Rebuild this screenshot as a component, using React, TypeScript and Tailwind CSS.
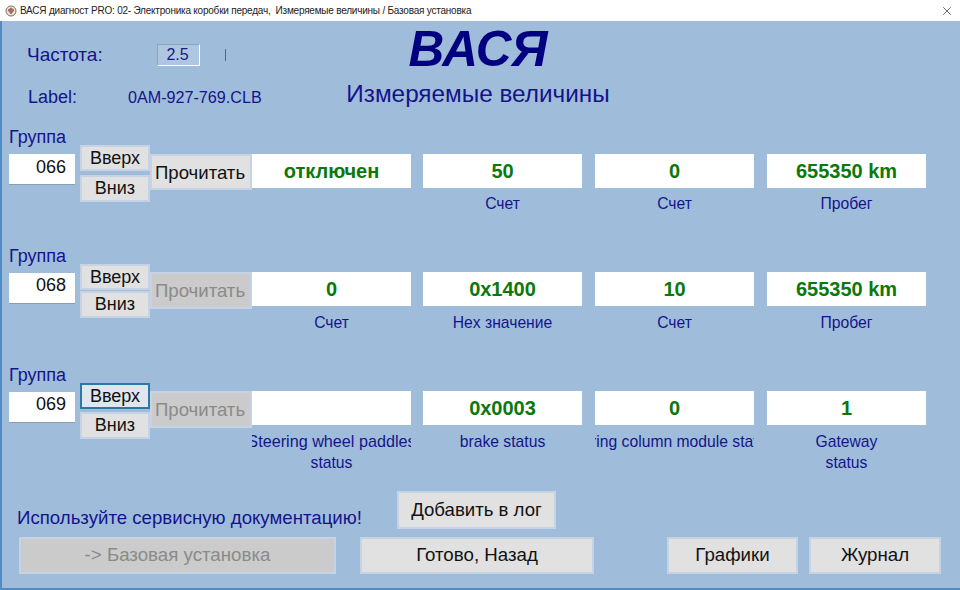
import { X } from "lucide-react";

const groups = [
    {
        id: "066",
        active: true,
        focused: false,
        downGap: "mt-[4px]",
        cellTop: "mt-[27px]",
        labelTop: "mt-[5px]",
        readHeight: "h-[36px]",
        inputText: "pt-[1px]",
        cells: [
            { value: "отключен", label: [] },
            { value: "50", label: ["Счет"] },
            { value: "0", label: ["Счет"] },
            { value: "655350 km", label: ["Пробег"] },
        ],
    },
    {
        id: "068",
        active: false,
        focused: false,
        downGap: "mt-[1px]",
        cellTop: "mt-[26px]",
        labelTop: "mt-[6px]",
        readHeight: "h-[37px]",
        inputText: "",
        cells: [
            { value: "0", label: ["Счет"] },
            { value: "0x1400", label: ["Hex значение"] },
            { value: "10", label: ["Счет"] },
            { value: "655350 km", label: ["Пробег"] },
        ],
    },
    {
        id: "069",
        active: false,
        focused: true,
        downGap: "mt-[3px]",
        cellTop: "mt-[26px]",
        labelTop: "mt-[6px]",
        readHeight: "h-[37px]",
        inputText: "",
        cells: [
            { value: "", label: ["Steering wheel paddles", "status"], lineClass: "first:text-[16.2px]" },
            { value: "0x0003", label: ["brake status"] },
            // clipped in the original too, sits a bit left of centre
            { value: "0", label: ["Steering column module status"], lineClass: "mr-[16px]" },
            { value: "1", label: ["Gateway", "status"] },
        ],
    },
];

const btn = "flex items-center justify-center border-2 border-[#c5d3e4] bg-[#e1e1e1] text-[#111]";
const btnOff = "flex items-center justify-center border-2 border-[#c5d3e4] bg-[#cbcbcb] text-[#8a8a8a]";

function Group({ group }: { group: (typeof groups)[number] }) {
    return (
        <div className="flex h-[119px] items-start">
            {/* Number */}
            <div className="flex w-[71px] shrink-0 flex-col">
                <div className="h-[27px] text-[18px] leading-[20px] text-[#14148a]">Группа</div>
                <div
                    className={`${group.inputText} flex h-[31px] w-[66px] items-start justify-end border-b border-[#8d9db0] bg-white pr-[9px] text-[18px] leading-[24px] text-[#111]`}
                >
                    {group.id}
                </div>
            </div>

            {/* Up / down */}
            <div className="mt-[18px] flex w-[70px] shrink-0 flex-col text-[18px]">
                <div
                    className={
                        group.focused
                            ? "flex h-[26px] items-center justify-center border-2 border-[#2a7aa8] bg-[#dfe6ee] text-[#111]"
                            : `${btn} h-[26px]`
                    }
                >
                    Вверх
                </div>
                <div className={`${btn} ${group.downGap} h-[27px]`}>Вниз</div>
            </div>

            {/* Read */}
            <div
                className={`${group.active ? btn : btnOff} ${group.cellTop} ${group.readHeight} w-[102px] shrink-0 pr-[2px] pt-[1px] text-[18.6px]`}
            >
                Прочитать
            </div>

            {/* Values */}
            <div className={`${group.cellTop} flex`}>
                {group.cells.map((cell, i) => (
                    <div
                        key={i}
                        className="ml-[13px] flex w-[159px] flex-col items-center first:ml-0 [&:nth-child(2)]:ml-[12px]"
                    >
                        <div className="flex h-[34px] w-full items-center justify-center bg-white text-[20px] font-bold text-[#0b780b]">
                            {cell.value}
                        </div>
                        <div
                            className={`${group.labelTop} flex w-full flex-col items-center overflow-hidden text-[15.7px] leading-[21px] text-[#14148a]`}
                        >
                            {cell.label.map((line) => (
                                <span key={line} className={`${cell.lineClass ?? ""} shrink-0 whitespace-nowrap`}>
                                    {line}
                                </span>
                            ))}
                        </div>
                    </div>
                ))}
            </div>
        </div>
    );
}

export default function App() {
    return (
        <div className="flex h-[590px] w-[960px] flex-col overflow-hidden bg-[#a0bcdb] font-['Liberation_Sans',Arial,sans-serif]">
            {/* Title bar */}
            <div className="flex h-[21px] shrink-0 items-center justify-between bg-white pl-[5px] pr-[6px]">
                <div className="flex items-center gap-[3px] text-[10px] tracking-[-0.22px] text-[#222]">
                    <svg width="12" height="12" viewBox="0 0 12 12">
                        <circle cx="6" cy="6" r="5" fill="#e9e4dc" stroke="#77706a" strokeWidth="1" />
                        <path d="M3 5 L6 9 L9 5 L6 3 Z" fill="#c9604f" stroke="#6a5a50" strokeWidth="0.6" />
                    </svg>
                    <span>
                        ВАСЯ диагност PRO: 02- Электроника коробки передач,&nbsp; Измеряемые величины / Базовая установка
                    </span>
                </div>
                <X className="h-[14px] w-[14px] text-[#333]" strokeWidth={1.25} />
            </div>

            {/* Window body */}
            <div className="flex flex-1 flex-col border-b-2 border-l-2 border-[#4f8dc9] pl-[7px]">
                {/* Header */}
                <div className="grid h-[106px] shrink-0 grid-cols-[231px_476px]">
                    <div className="flex flex-col pl-[18px] pt-[23px]">
                        <div className="flex h-[22px] items-center">
                            <span className="w-[130px] shrink-0 whitespace-nowrap text-[19px] text-[#14148a]">Частота:</span>
                            <span className="flex h-[22px] w-[43px] shrink-0 items-center justify-center border border-b-white border-l-[#8fa5bf] border-r-white border-t-[#8fa5bf] bg-[#afc6e0] pr-[2px] text-[16px] text-[#1a1a80]">
                                2.5
                            </span>
                            <span className="ml-[25px] h-[12px] w-[1px] bg-[#4a6a9a]" />
                        </div>
                        <div className="mt-[18px] flex items-center">
                            <span className="w-[101px] shrink-0 pl-[1px] text-[18px] text-[#14148a]">Label:</span>
                            <span className="shrink-0 whitespace-nowrap text-[16.15px] text-[#14148a]">0AM-927-769.CLB</span>
                        </div>
                    </div>
                    <div className="flex flex-col items-center">
                        <div className="mt-[-1px] text-[49.5px] font-bold italic leading-[58px] text-[#000080]">ВАСЯ</div>
                        <div className="mt-[2px] text-[24.3px] leading-[28px] text-[#14148a]">Измеряемые величины</div>
                    </div>
                </div>

                {/* Groups */}
                {groups.map((group) => (
                    <Group key={group.id} group={group} />
                ))}

                {/* Bottom */}
                <div className="mt-[7px] flex items-end pl-[8px]">
                    <span className="w-[380px] shrink-0 whitespace-nowrap text-[18.65px] leading-[22px] text-[#14148a]">
                        Используйте сервисную документацию!
                    </span>
                    <div className={`${btn} h-[38px] w-[159px] text-[18.6px]`}>Добавить в лог</div>
                </div>
                <div className="mt-[8px] flex items-start pl-[10px] text-[18.7px]">
                    <div className={`${btnOff} h-[37px] w-[317px]`}>-&gt; Базовая установка</div>
                    <div className={`${btn} ml-[24px] h-[37px] w-[234px]`}>Готово, Назад</div>
                    <div className={`${btn} ml-[73px] h-[37px] w-[131px]`}>Графики</div>
                    <div className={`${btn} ml-[11px] h-[37px] w-[132px]`}>Журнал</div>
                </div>
            </div>
        </div>
    );
}
